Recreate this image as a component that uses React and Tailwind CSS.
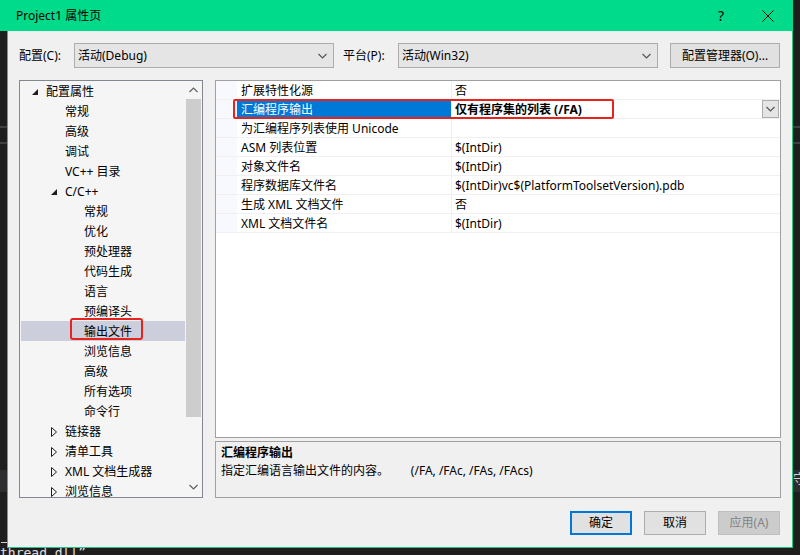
const treeItems = [
  { label: '配置属性', level: 0, icon: 'open' },
  { label: '常规', level: 1 },
  { label: '高级', level: 1 },
  { label: '调试', level: 1 },
  { label: 'VC++ 目录', level: 1 },
  { label: 'C/C++', level: 1, icon: 'open' },
  { label: '常规', level: 2 },
  { label: '优化', level: 2 },
  { label: '预处理器', level: 2 },
  { label: '代码生成', level: 2 },
  { label: '语言', level: 2 },
  { label: '预编译头', level: 2 },
  { label: '输出文件', level: 2, selected: true },
  { label: '浏览信息', level: 2 },
  { label: '高级', level: 2 },
  { label: '所有选项', level: 2 },
  { label: '命令行', level: 2 },
  { label: '链接器', level: 1, icon: 'closed' },
  { label: '清单工具', level: 1, icon: 'closed' },
  { label: 'XML 文档生成器', level: 1, icon: 'closed' },
  { label: '浏览信息', level: 1, icon: 'closed' },
];

const levelPad = ['pl-[11px]', 'pl-[30px]', 'pl-[49px]'];

const props = [
  ['扩展特性化源', '否'],
  ['汇编程序输出', '仅有程序集的列表 (/FA)', true],
  ['为汇编程序列表使用 Unicode', ''],
  ['ASM 列表位置', '$(IntDir)'],
  ['对象文件名', '$(IntDir)'],
  ['程序数据库文件名', '$(IntDir)vc$(PlatformToolsetVersion).pdb'],
  ['生成 XML 文档文件', '否'],
  ['XML 文档文件名', '$(IntDir)'],
];

function Chevron({ up, className }) {
  return (
    <svg width="9" height="6" viewBox="0 0 9 6" className={className}>
      <path
        d={up ? 'M0.5 5 L4.5 1 L8.5 5' : 'M0.5 1 L4.5 5 L8.5 1'}
        fill="none"
        stroke="currentColor"
        strokeWidth="1.2"
      />
    </svg>
  );
}

function TreeIcon({ type }) {
  if (type === 'open')
    return (
      <svg width="6" height="6" viewBox="0 0 6 6">
        <polygon points="6,0 6,6 0,6" fill="#1e1e1e" />
      </svg>
    );
  if (type === 'closed')
    return (
      <svg width="6" height="10" viewBox="0 0 6 10">
        <polygon points="0.5,0.5 5.5,5 0.5,9.5" fill="none" stroke="#1e1e1e" strokeWidth="1" />
      </svg>
    );
  return null;
}

function Select({ value, className }) {
  return (
    <div
      className={`h-[25px] flex items-center justify-between bg-[#e5e5e5] border border-[#acacac] pl-[3px] pr-[6px] ${className}`}
    >
      <span>{value}</span>
      <Chevron className="text-[#555]" />
    </div>
  );
}

function Button({ children, primary, disabled }) {
  return (
    <div
      className={`w-[62px] h-[24px] flex items-center justify-center ${
        primary
          ? 'border-2 border-[#0078d7] bg-[#e1e1e1]'
          : disabled
          ? 'border border-[#bfbfbf] bg-[#cccccc] text-[#838383]'
          : 'border border-[#adadad] bg-[#e1e1e1]'
      }`}
    >
      {children}
    </div>
  );
}

export default function App() {
  return (
    <div className="relative w-[800px] h-[555px] overflow-hidden bg-[#1e1e1e] font-['Segoe_UI','Noto_Sans','Noto_Sans_CJK_SC',sans-serif] text-[12px] text-black">
      {/* editor behind the dialog */}
      <div className="absolute left-0 top-[126px] w-full h-[2px] bg-[#3f3f46]" />
      <div className="absolute left-0 top-[142px] w-full h-[2px] bg-[#3f3f46]" />
      <div className="absolute left-0 top-[470px] w-full h-[22px] bg-[#2d2d30]" />
      <div className="absolute left-[793px] top-[469px] text-[13px] text-[#d0d0d0]">守</div>
      <div className="absolute left-[1px] top-[542px] w-[6px] h-[1px] bg-[#d0d0d0]" />
      <div className="absolute left-0 top-[546px] font-['DejaVu_Sans_Mono',monospace] text-[13px] leading-[14px] text-[#e0e0e0] whitespace-pre">
        thread.dll”.
      </div>

      {/* dialog window */}
      <div className="absolute left-0 top-0 w-[793px] flex flex-col">
        <div className="h-[31px] bg-[#00db8b] flex items-center pl-[16px] pr-[19px]">
          <span className="flex-1">Project1 属性页</span>
          <span className="text-[14px] mr-[38px]">?</span>
          <svg width="12" height="12" viewBox="0 0 12 12">
            <path d="M0.5 0.5 L11.5 11.5 M11.5 0.5 L0.5 11.5" stroke="#000" strokeWidth="1" />
          </svg>
        </div>

        <div className="ml-[7px] w-[786px] h-[517px] bg-[#f0f0f0] border-x border-b border-[#1fc585] flex flex-col pl-[11px] pr-[11px] pt-[12px]">
          <div className="h-[25px] flex items-center">
            <span className="w-[55px]">配置(C):</span>
            <Select value="活动(Debug)" className="w-[260px]" />
            <span className="ml-[9px] w-[55px]">平台(P):</span>
            <Select value="活动(Win32)" className="w-[260px]" />
            <div className="ml-[12px] w-[110px] h-[25px] bg-[#e1e1e1] border border-[#adadad] flex items-center justify-center">
              配置管理器(O)...
            </div>
          </div>

          <div className="mt-[12px] flex gap-[12px]">
            {/* tree */}
            <div className="w-[184px] h-[418px] border border-[#828790] bg-[#f5f5f5] flex overflow-hidden">
              <div className="flex-1 flex flex-col">
                {treeItems.map((it, i) => (
                  <div
                    key={i}
                    className={`relative shrink-0 h-[20px] pt-[1px] flex items-center ml-[1px] ${levelPad[it.level]} ${
                      it.selected ? 'bg-[#cccedb]' : ''
                    }`}
                  >
                    <span className="w-[14px] flex items-center">
                      <TreeIcon type={it.icon} />
                    </span>
                    <span>{it.label}</span>
                    {it.selected && (
                      <div className="absolute left-[49px] top-[-3px] w-[73px] h-[22px] border-2 border-[#e8231d] rounded-[3px]" />
                    )}
                  </div>
                ))}
              </div>
              <div className="w-[17px] flex flex-col items-center">
                <div className="h-[18px] flex items-center justify-center text-[#606060]">
                  <Chevron up />
                </div>
                <div className="w-[15px] h-[318px] bg-[#cdcdcd]" />
                <div className="flex-1" />
                <div className="h-[20px] flex items-center justify-center text-[#606060]">
                  <Chevron />
                </div>
              </div>
            </div>

            {/* property grid + description */}
            <div className="w-[566px] flex flex-col gap-[3px]">
              <div className="h-[358px] border border-[#a0a0a0] bg-white flex flex-col">
                {props.map(([name, value, sel], i) => (
                  <div key={i} className="relative h-[19px] flex border-b border-[#f0f0f0]">
                    <div className="w-[21px] bg-[#f7f9fe]" />
                    <div
                      className={`w-[215px] pl-[4px] pt-[1px] flex items-center border-r border-[#f0f0f0] ${
                        sel ? 'bg-[#0078d7] text-white' : ''
                      }`}
                    >
                      {name}
                    </div>
                    <div className={`flex-1 pl-[3px] flex items-center ${sel ? 'font-bold' : ''}`}>
                      <span className="flex-1 pt-[1px]">{value}</span>
                      {sel && (
                        <div className="w-[17px] h-[18px] mr-[1px] bg-[#e5e5e5] border border-[#acacac] flex items-center justify-center text-[#555]">
                          <Chevron />
                        </div>
                      )}
                    </div>
                    {sel && (
                      <div className="absolute left-[17px] top-[-1px] w-[381px] h-[20px] border-2 border-[#e8231d] rounded-[2px]" />
                    )}
                  </div>
                ))}
              </div>
              <div className="h-[57px] border border-[#a0a0a0] bg-[#f0f0f0] pl-[5px] pt-[2px] flex flex-col">
                <div className="h-[18px] flex items-center font-bold">汇编程序输出</div>
                <div className="h-[18px] flex items-center whitespace-pre">
                  指定汇编语言输出文件的内容。       (/FA, /FAc, /FAs, /FAcs)
                </div>
              </div>
            </div>
          </div>

          <div className="mt-[13px] flex justify-end gap-[12px] pr-[1px]">
            <Button primary>确定</Button>
            <Button>取消</Button>
            <Button disabled>应用(A)</Button>
          </div>
        </div>
      </div>
    </div>
  );
}
